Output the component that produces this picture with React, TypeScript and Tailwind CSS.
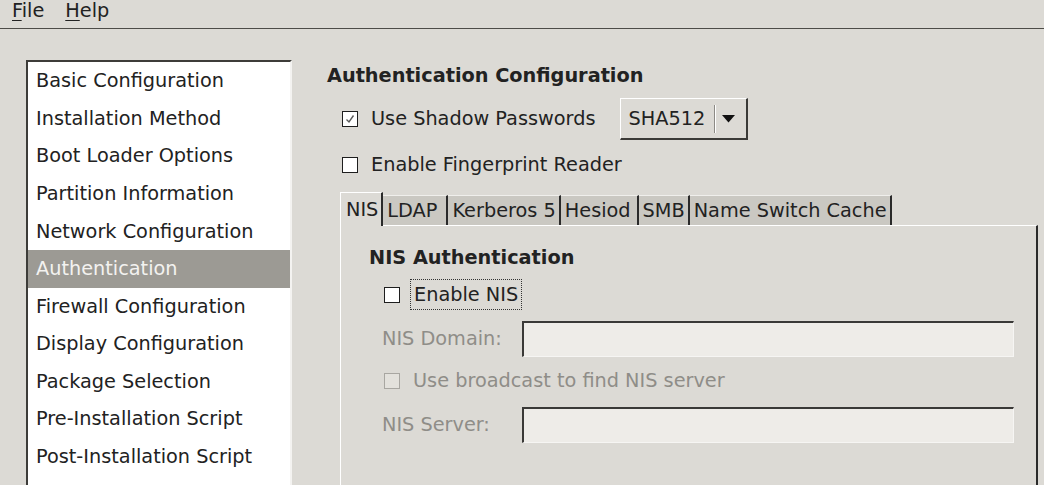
import React from "react";

const sections = [
  "Basic Configuration",
  "Installation Method",
  "Boot Loader Options",
  "Partition Information",
  "Network Configuration",
  "Authentication",
  "Firewall Configuration",
  "Display Configuration",
  "Package Selection",
  "Pre-Installation Script",
  "Post-Installation Script",
];

const tabs = [
  { id: "nis", label: "NIS", pad: "pr-[3px]" },
  { id: "ldap", label: "LDAP", pad: "pr-[9px]" },
  { id: "krb", label: "Kerberos 5", pad: "pr-[3px]" },
  { id: "hes", label: "Hesiod", pad: "pr-[6px]" },
  { id: "smb", label: "SMB", pad: "pr-[3px]" },
  { id: "nsc", label: "Name Switch Cache", pad: "pr-[3px]" },
];

const CheckBox = ({ checked = false, disabled = false }: { checked?: boolean; disabled?: boolean }) => {
  return (
    <span
      className={
        disabled
          ? "flex h-[16px] w-[16px] shrink-0 items-center justify-center border border-[#a8a6a1] bg-[#e3e1dc]"
          : "flex h-[16px] w-[16px] shrink-0 items-center justify-center border border-[#1e1e1e] bg-white"
      }
    >
      {checked && (
        <svg width="12" height="12" viewBox="0 0 12 12">
          <path d="M2.5 6.5 L5 9 L9.5 2.5" stroke="#5a5a5a" strokeWidth="1.4" fill="none" />
        </svg>
      )}
    </span>
  );
};

const Entry = () => (
  <div className="h-[36px] w-[492px] border-t-2 border-l-2 border-[#3a3937] border-r border-b border-r-[#f6f5f3] border-b-[#f6f5f3] bg-[#eeece8]"></div>
);

export default function App() {
  return (
    <div className="h-[485px] w-[1044px] overflow-hidden bg-[#dcdad5] font-['DejaVu_Sans',sans-serif] text-[19.3px] text-[#222222]">
      {/* menu bar */}
      <div className="flex h-[29px] items-start border-b border-[#4d4c48] pl-[12px] leading-[22px]">
        <span>
          <span className="underline decoration-1 underline-offset-[3px]">F</span>ile
        </span>
        <span className="ml-[21px]">
          <span className="underline decoration-1 underline-offset-[3px]">H</span>elp
        </span>
      </div>

      <div className="flex pl-[26px] pt-[31px]">
        {/* section list */}
        <div className="h-[430px] w-[266px] shrink-0 border-t-2 border-l-2 border-[#3d3c39] border-r-2 border-r-[#f4f3f1] bg-white">
          {sections.map((s) =>
            s === "Authentication" ? (
              <div key={s} className="flex h-[37.6px] items-center bg-[#9c9a94] pl-[8px] leading-none whitespace-nowrap text-[#f3f2f0]">
                {s}
              </div>
            ) : (
              <div key={s} className="flex h-[37.6px] items-center pl-[8px] leading-none whitespace-nowrap">
                {s}
              </div>
            )
          )}
        </div>

        {/* right side */}
        <div className="ml-[35px] flex flex-col">
          <div className="mt-[5px] font-bold leading-[22px]">Authentication Configuration</div>

          <div className="mt-[11px] flex h-[42px] items-center pl-[15px]">
            <CheckBox checked />
            <span className="ml-[13px] leading-[22px]">Use Shadow Passwords</span>
            <div className="ml-[25px] flex h-[42px] w-[128px] items-center border border-t-white border-l-white border-r-2 border-b-2 border-r-[#3b3a37] border-b-[#3b3a37] pl-[7px]">
              <span className="leading-[22px]">SHA512</span>
              <span className="ml-[9px] h-[28px] w-[2px] border-l border-r border-l-[#8c8a85] border-r-white"></span>
              <svg className="ml-[6px]" width="13" height="8" viewBox="0 0 13 8">
                <path d="M0 0 H13 L6.5 7.5 Z" fill="#111" />
              </svg>
            </div>
          </div>

          <div className="mt-[14px] flex h-[22px] items-center pl-[15px]">
            <CheckBox />
            <span className="ml-[13px] leading-[22px]">Enable Fingerprint Reader</span>
          </div>

          {/* notebook */}
          <div className="ml-[13px] mt-[16px] w-[698px]">
            <div className="flex h-[33px] items-end">
              {tabs.map((t, i) =>
                i === 0 ? (
                  <div
                    key={t.id}
                    className={`relative z-10 -mb-px flex h-[34px] items-center border-t border-l border-white border-r-2 border-r-[#2a2a2a] bg-[#dcdad5] pl-[5px] ${t.pad} leading-none whitespace-nowrap`}
                  >
                    {t.label}
                  </div>
                ) : (
                  <div
                    key={t.id}
                    className={`flex h-[30px] items-center border-t border-[#f0efec] border-r-2 border-r-[#2a2a2a] bg-[#cac8c2] pl-[4px] ${t.pad} leading-none whitespace-nowrap`}
                  >
                    {t.label}
                  </div>
                )
              )}
            </div>
            <div className="h-[270px] border-t border-l border-white border-r-2 border-r-[#2a2a2a] pl-[28px] pt-[21px]">
              <div className="font-bold leading-[22px]">NIS Authentication</div>

              <div className="mt-[10px] flex h-[31px] items-center pl-[15px]">
                <CheckBox />
                <span className="ml-[10px] flex h-[31px] items-center border border-dotted border-[#333] px-[3px] leading-none">
                  Enable NIS
                </span>
              </div>

              <div className="mt-[11px] flex items-center text-[#8f8d88]">
                <span className="w-[153px] pl-[13px] leading-none">NIS Domain:</span>
                <Entry />
              </div>

              <div className="mt-[12px] flex h-[24px] items-center pl-[15px] text-[#8f8d88]">
                <CheckBox disabled />
                <span className="ml-[13px] leading-none">Use broadcast to find NIS server</span>
              </div>

              <div className="mt-[14px] flex items-center text-[#8f8d88]">
                <span className="w-[153px] pl-[13px] leading-none">NIS Server:</span>
                <Entry />
              </div>
            </div>
          </div>
        </div>
      </div>
    </div>
  );
}
